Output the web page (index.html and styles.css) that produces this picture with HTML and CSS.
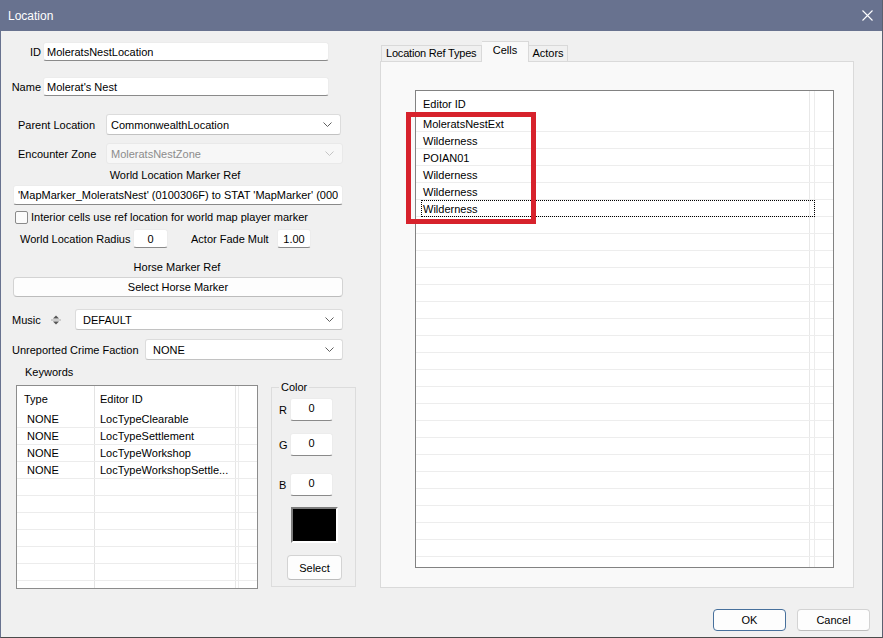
FILE: index.html
```html
<!DOCTYPE html>
<html lang="en">
<head>
    <meta charset="UTF-8">
    <title>Location</title>
    <link rel="stylesheet" href="styles.css">
</head>
<body>
    <div class="window">
        <div class="titlebar">
            <span class="title">Location</span>
            <svg class="close" width="11" height="11" viewBox="0 0 11 11">
                <path d="M0.5 0.5 L10.5 10.5 M10.5 0.5 L0.5 10.5" stroke="#fff" stroke-width="1.1" fill="none"/>
            </svg>
        </div>

        <div class="main">
            <div class="left">
                <div class="row row-id">
                    <label class="lbl-short">ID</label>
                    <input type="text" class="field field-id" value="MoleratsNestLocation">
                </div>
                <div class="row row-name">
                    <label class="lbl-short">Name</label>
                    <input type="text" class="field field-id" value="Molerat's Nest">
                </div>
                <div class="row row-parent">
                    <label class="lbl-combo">Parent Location</label>
                    <div class="combo combo-parent">
                        <span>CommonwealthLocation</span>
                        <svg class="chev" width="9" height="5" viewBox="0 0 9 5"><path d="M0.5 0.5 L4.5 4.5 L8.5 0.5" stroke="#5f5f5f" fill="none"/></svg>
                    </div>
                </div>
                <div class="row row-zone">
                    <label class="lbl-combo">Encounter Zone</label>
                    <div class="combo combo-zone disabled">
                        <span>MoleratsNestZone</span>
                        <svg class="chev" width="9" height="5" viewBox="0 0 9 5"><path d="M0.5 0.5 L4.5 4.5 L8.5 0.5" stroke="#c4c4c4" fill="none"/></svg>
                    </div>
                </div>
                <div class="caption caption-world">World Location Marker Ref</div>
                <div class="row row-marker">
                    <input type="text" class="field field-wide" value="'MapMarker_MoleratsNest' (0100306F) to STAT 'MapMarker' (00000010)">
                </div>
                <div class="row row-check">
                    <span class="checkbox"></span>
                    <label class="check-label">Interior cells use ref location for world map player marker</label>
                </div>
                <div class="row row-radius">
                    <label class="lbl-radius">World Location Radius</label>
                    <input type="text" class="field field-num" value="0">
                    <label class="lbl-fade">Actor Fade Mult</label>
                    <input type="text" class="field field-num2" value="1.00">
                </div>
                <div class="caption caption-horse">Horse Marker Ref</div>
                <div class="row row-horse">
                    <button class="btn btn-wide">Select Horse Marker</button>
                </div>
                <div class="row row-music">
                    <label class="lbl-music">Music</label>
                    <svg class="spin" width="12" height="14" viewBox="0 0 12 14">
                        <path d="M3 5.5 L6 2.5 L9 5.5 Z" fill="#555"/>
                        <path d="M1 7 H11" stroke="#aaa"/>
                        <path d="M3 8.5 L6 11.5 L9 8.5 Z" fill="#555"/>
                    </svg>
                    <div class="combo combo-music">
                        <span>DEFAULT</span>
                        <svg class="chev" width="9" height="5" viewBox="0 0 9 5"><path d="M0.5 0.5 L4.5 4.5 L8.5 0.5" stroke="#5f5f5f" fill="none"/></svg>
                    </div>
                </div>
                <div class="row row-crime">
                    <label class="lbl-crime">Unreported Crime Faction</label>
                    <div class="combo combo-crime">
                        <span>NONE</span>
                        <svg class="chev" width="9" height="5" viewBox="0 0 9 5"><path d="M0.5 0.5 L4.5 4.5 L8.5 0.5" stroke="#5f5f5f" fill="none"/></svg>
                    </div>
                </div>

                <div class="lower">
                    <div class="keywords">
                        <div class="kw-title">Keywords</div>
                        <div class="kw-list">
                            <div class="kw-head">
                                <span class="kw-type">Type</span>
                                <span class="kw-id">Editor ID</span>
                            </div>
                            <div class="kw-body">
                                <div class="kw-row"><span class="kw-type">NONE</span><span class="kw-id">LocTypeClearable</span></div>
                                <div class="kw-row"><span class="kw-type">NONE</span><span class="kw-id">LocTypeSettlement</span></div>
                                <div class="kw-row"><span class="kw-type">NONE</span><span class="kw-id">LocTypeWorkshop</span></div>
                                <div class="kw-row"><span class="kw-type">NONE</span><span class="kw-id">LocTypeWorkshopSettle...</span></div>
                            </div>
                        </div>
                    </div>

                    <fieldset class="color-group">
                        <legend>Color</legend>
                        <div class="rgb rgb-r">
                            <label>R</label>
                            <input type="text" class="field field-rgb" value="0">
                        </div>
                        <div class="rgb rgb-g">
                            <label>G</label>
                            <input type="text" class="field field-rgb" value="0">
                        </div>
                        <div class="rgb rgb-b">
                            <label>B</label>
                            <input type="text" class="field field-rgb" value="0">
                        </div>
                        <div class="swatch"></div>
                        <button class="btn btn-select">Select</button>
                    </fieldset>
                </div>
            </div>

            <div class="right">
                <div class="tabs">
                    <div class="tab tab-types">Location Ref Types</div>
                    <div class="tab tab-cells active">Cells</div>
                    <div class="tab tab-actors">Actors</div>
                </div>
                <div class="panel">
                    <div class="cells-wrap">
                        <div class="cells-list">
                            <div class="cells-head">Editor ID</div>
                            <div class="cells-body">
                                <div class="cell-row">MoleratsNestExt</div>
                                <div class="cell-row">Wilderness</div>
                                <div class="cell-row">POIAN01</div>
                                <div class="cell-row">Wilderness</div>
                                <div class="cell-row">Wilderness</div>
                                <div class="cell-row"><span class="focus">Wilderness</span></div>
                            </div>
                        </div>
                        <div class="highlight"></div>
                    </div>
                </div>
            </div>
        </div>

        <div class="footer">
            <button class="btn btn-foot btn-default">OK</button>
            <button class="btn btn-foot">Cancel</button>
        </div>
    </div>
</body>
</html>
```

FILE: styles.css
```css
* {
    margin: 0;
    padding: 0;
    box-sizing: border-box;
}

body {
    width: 883px;
    height: 638px;
    overflow: hidden;
    background: #f0f0f0;
    font-family: "Liberation Sans", Arial, sans-serif;
    font-size: 11px;
    color: #000;
}

input, button {
    font-family: inherit;
    font-size: 11px;
    color: #000;
}

.window {
    width: 883px;
    height: 638px;
    display: flex;
    flex-direction: column;
    background: #f0f0f0;
    border-left: 1px solid #68728f;
    border-right: 1px solid #5a6070;
    border-bottom: 1px solid #4b4b4b;
}

/* title bar */
.titlebar {
    height: 31px;
    flex-shrink: 0;
    background: #68728f;
    display: flex;
    align-items: center;
    justify-content: space-between;
    padding: 0 9px 0 7px;
}

.title {
    color: #fff;
    font-size: 12px;
}

.main {
    height: 567px;
    display: flex;
}

/* left column */
.left {
    width: 358px;
    flex-shrink: 0;
    display: flex;
    flex-direction: column;
}

.row {
    display: flex;
    align-items: center;
}

.row > * { flex-shrink: 0; }

.row-id { margin-top: 11px; height: 19px; }
.row-name { margin-top: 16px; height: 19px; }
.row-parent { margin-top: 18px; height: 21px; padding-left: 17px; }
.row-zone { margin-top: 8px; height: 21px; padding-left: 17px; }
.row-marker { margin-top: 3px; height: 20px; padding-left: 12px; }
.row-check { margin-top: 5px; height: 14px; padding-left: 14px; }
.row-radius { margin-top: 5px; height: 19px; padding-left: 19px; }
.row-horse { margin-top: 3px; height: 20px; padding-left: 12px; }
.row-music { margin-top: 12px; height: 21px; padding-left: 11px; }
.row-crime { margin-top: 9px; height: 21px; padding-left: 11px; }

.lbl-short {
    width: 42px;
    text-align: right;
    padding-right: 2px;
}

.lbl-combo { width: 88px; }
.lbl-radius { width: 113px; }
.lbl-fade { width: 86px; margin-left: 23px; }
.lbl-music { width: 38px; }
.lbl-crime { width: 133px; }

.caption {
    height: 14px;
    line-height: 14px;
    text-align: center;
}

.caption-world { margin-top: 4px; padding-right: 10px; }
.caption-horse { margin-top: 12px; padding-right: 6px; }

.field {
    height: 100%;
    background: #fff;
    border: 1px solid #ececec;
    border-bottom-color: #8a8a8a;
    border-radius: 3px;
    padding: 0 3px;
    outline: none;
}

.field-id { width: 286px; }
.field-wide { width: 330px; padding: 0 4px; }
.field-num { width: 35px; text-align: center; }
.field-num2 { width: 34px; text-align: center; }
.field-rgb { width: 43px; text-align: center; padding-bottom: 3px; }

.combo {
    height: 100%;
    background: #fff;
    border: 1px solid #dcdcdc;
    border-bottom-color: #c2c2c2;
    border-radius: 3px;
    display: flex;
    align-items: center;
    justify-content: space-between;
    padding: 0 8px 0 4px;
}

.combo.disabled {
    background: #f7f7f7;
    border-color: #e9e9e9;
    color: #8c8c8c;
}

.combo-parent { width: 235px; }
.combo-zone { width: 237px; }
.combo-music { width: 268px; margin-left: 13px; padding-left: 7px; }
.combo-crime { width: 198px; padding-left: 7px; }

.checkbox {
    width: 13px;
    height: 13px;
    border: 1px solid #8a8a8a;
    border-radius: 2px;
    background: #fbfbfb;
}

.check-label {
    margin-left: 3px;
}

.btn {
    background: #fdfdfd;
    border: 1px solid #d3d3d3;
    border-bottom-color: #bcbcbc;
    border-radius: 4px;
}

.btn-wide {
    width: 330px;
    height: 20px;
}

/* keywords + color */
.lower {
    display: flex;
    margin-top: 5px;
    padding-left: 15px;
}

.lower > * { flex-shrink: 0; }

.keywords {
    width: 242px;
}

.kw-title {
    height: 14px;
    line-height: 14px;
    padding-left: 9px;
}

.kw-list {
    margin-top: 6px;
    height: 204px;
    border: 1px solid #8c8c8c;
    background-color: #fff;
    background-image:
        linear-gradient(to right, transparent 77px, #e3e3e3 77px, #e3e3e3 78px, transparent 78px),
        linear-gradient(to right, transparent 218px, #e6e6e6 218px, #e6e6e6 219px, transparent 219px),
        linear-gradient(to right, transparent 221px, #ededed 221px, #ededed 222px, transparent 222px);
    overflow: hidden;
}

.kw-head {
    height: 25px;
    display: flex;
    align-items: center;
}

.kw-head .kw-type { width: 77px; padding-left: 7px; }
.kw-head .kw-id { padding-left: 6px; }

.kw-body {
    height: 177px;
    background: repeating-linear-gradient(to bottom, transparent 0, transparent 16px, #ececec 16px, #ececec 17px);
}

.kw-row {
    height: 17px;
    line-height: 16px;
    display: flex;
}

.kw-row .kw-type { width: 77px; padding-left: 10px; }
.kw-row .kw-id { padding-left: 6px; }

.color-group {
    margin-top: 15px;
    margin-left: 13px;
    width: 85px;
    height: 207px;
    border: 1px solid #dcdcdc;
    padding: 0 0 0 7px;
}

.color-group legend {
    padding: 0 2px;
    line-height: 14px;
}

.rgb {
    display: flex;
    align-items: center;
    height: 23px;
}

.rgb label { width: 11px; }

.rgb-r { margin-top: 4px; }
.rgb-g { margin-top: 12px; }
.rgb-b { margin-top: 17px; }

.swatch {
    margin-top: 11px;
    margin-left: 12px;
    width: 47px;
    height: 36px;
    background: #000;
    border: 2px solid;
    border-color: #7d7d7d #fff #fff #7d7d7d;
}

.btn-select {
    margin-top: 12px;
    margin-left: 8px;
    width: 55px;
    height: 25px;
}

/* right side */
.right {
    margin-left: 21px;
    margin-top: 10px;
    width: 474px;
}

.tabs {
    height: 20px;
    display: flex;
    align-items: flex-end;
    padding-left: 1px;
}

.tab {
    height: 16px;
    line-height: 15px;
    background: #f0f0f0;
    border: 1px solid #d9d9d9;
    border-bottom: none;
    text-align: center;
    white-space: nowrap;
    flex-shrink: 0;
}

.tab-types { width: 101px; text-align: left; padding-left: 4px; letter-spacing: -0.2px; }
.tab-actors { width: 39px; border-left: none; }

.tab-cells.active {
    width: 47px;
    height: 21px;
    margin-bottom: -1px;
    padding-top: 1px;
    background: #f9f9f9;
    border-left: none;
    position: relative;
}

.panel {
    height: 527px;
    background: #f9f9f9;
    border: 1px solid #dadada;
    padding: 28px 0 0 34px;
}

.cells-wrap {
    position: relative;
    width: 419px;
    height: 478px;
}

.cells-list {
    height: 100%;
    border: 1px solid #828282;
    background-color: #fff;
    background-image:
        linear-gradient(to right, transparent 393px, #e8e8e8 393px, #e8e8e8 394px, transparent 394px),
        linear-gradient(to right, transparent 398px, #ececec 398px, #ececec 399px, transparent 399px);
    overflow: hidden;
}

.cells-head {
    height: 24px;
    line-height: 26px;
    padding-left: 7px;
}

.cells-body {
    height: 452px;
    background: repeating-linear-gradient(to bottom, transparent 0, transparent 16px, #ededed 16px, #ededed 17px);
}

.cell-row {
    height: 17px;
    line-height: 18px;
    padding-left: 7px;
}

.cell-row .focus {
    display: block;
    margin-left: -2px;
    width: 394px;
    height: 17px;
    line-height: 16px;
    border: 1px dotted #000;
    padding-left: 1px;
}

.highlight {
    position: absolute;
    left: -9px;
    top: 22px;
    width: 130px;
    height: 112px;
    border: 5px solid #d7222c;
}

/* footer */
.footer {
    flex: 1;
    display: flex;
    justify-content: flex-end;
    gap: 11px;
    padding: 11px 12px 0 0;
}

.btn-foot {
    width: 73px;
    height: 22px;
}

.btn-default {
    border: 1px solid #47709c;
}
```
